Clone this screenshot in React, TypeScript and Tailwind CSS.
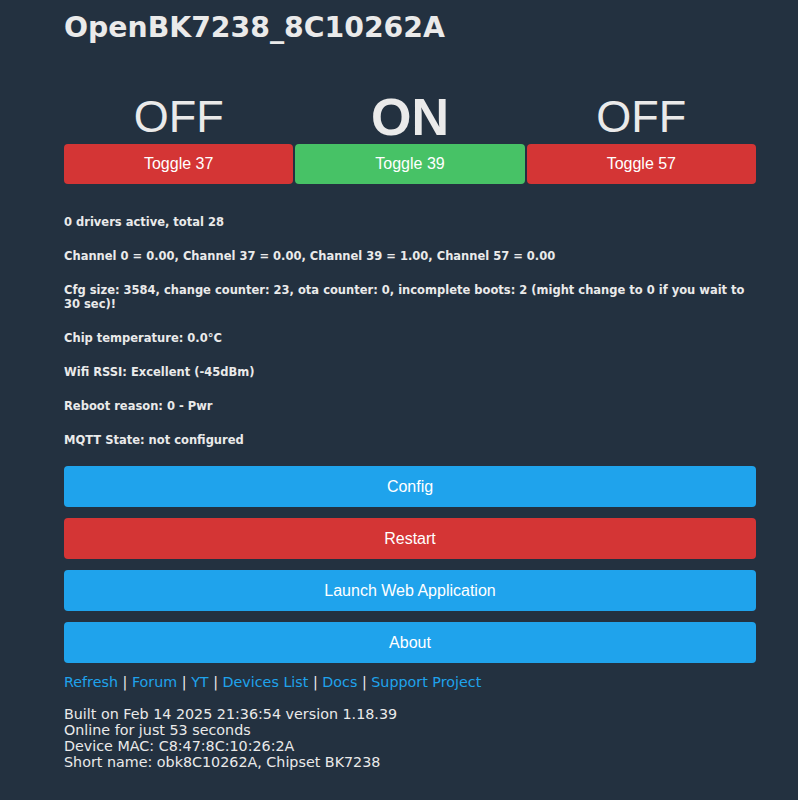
const verdana = "font-['DejaVu_Sans',Verdana,sans-serif]";
const arial = "font-['Liberation_Sans',Arial,sans-serif]";

const info = [
  "0 drivers active, total 28",
  "Channel 0 = 0.00, Channel 37 = 0.00, Channel 39 = 1.00, Channel 57 = 0.00",
  "Cfg size: 3584, change counter: 23, ota counter: 0, incomplete boots: 2 (might change to 0 if you wait to 30 sec)!",
  "Chip temperature: 0.0°C",
  "Wifi RSSI: Excellent (-45dBm)",
  "Reboot reason: 0 - Pwr",
  "MQTT State: not configured",
];

const toggles = [
  { label: "OFF", ch: 37, on: false },
  { label: "ON", ch: 39, on: true },
  { label: "OFF", ch: 57, on: false },
];

const menu = [
  { label: "Config", cls: "bg-[#1fa3ec]" },
  { label: "Restart", cls: "bg-[#d43535]" },
  { label: "Launch Web Application", cls: "bg-[#1fa3ec]" },
  { label: "About", cls: "bg-[#1fa3ec]" },
];

const links = ["Refresh", "Forum", "YT", "Devices List", "Docs", "Support Project"];

export default function App() {
  return (
    <div className={`min-h-[800px] bg-[#233140] text-[#eaeaea] ${verdana}`}>
      <div className="ml-[64px] w-[692px] pt-[10px] pb-6">
        <h1 className="text-[28.3px] font-bold leading-[35px]">OpenBK7238_8C10262A</h1>

        <div className="mt-[45px] grid grid-cols-3 gap-[2px]">
          {toggles.map((t, i) => (
            <div key={i} className="flex flex-col">
              <div
                className={`${arial} text-center leading-[54px] ${t.on ? "text-[52px] font-bold" : "text-[45px] font-normal"}`}
              >
                {t.label}
              </div>
              <button
                className={`${arial} h-[40px] rounded-[4px] text-[16px] text-white ${t.on ? "bg-[#47c266]" : "bg-[#d43535]"}`}
              >
                Toggle {t.ch}
              </button>
            </div>
          ))}
        </div>

        <div className="mt-[31px] flex flex-col gap-[20px] text-[11.5px] font-bold leading-[14px]">
          {info.map((s, i) => (
            <p key={i}>{s}</p>
          ))}
        </div>

        <div className="mt-[19px] flex flex-col gap-[11px]">
          {menu.map((m) => (
            <button
              key={m.label}
              className={`${arial} h-[41px] w-full rounded-[4px] text-[16px] text-white ${m.cls}`}
            >
              {m.label}
            </button>
          ))}
        </div>

        <div className="mt-[11px] text-[14.3px] leading-[16px]">
          {links.map((l, i) => (
            <span key={l}>
              {i > 0 && " | "}
              <a className="text-[#1fa3ec]" href="#">
                {l}
              </a>
            </span>
          ))}
        </div>

        <div className="mt-[16px] text-[14.3px] leading-[16px]">
          <div>Built on Feb 14 2025 21:36:54 version 1.18.39</div>
          <div>Online for just 53 seconds</div>
          <div>Device MAC: C8:47:8C:10:26:2A</div>
          <div>Short name: obk8C10262A, Chipset BK7238</div>
        </div>
      </div>
    </div>
  );
}
